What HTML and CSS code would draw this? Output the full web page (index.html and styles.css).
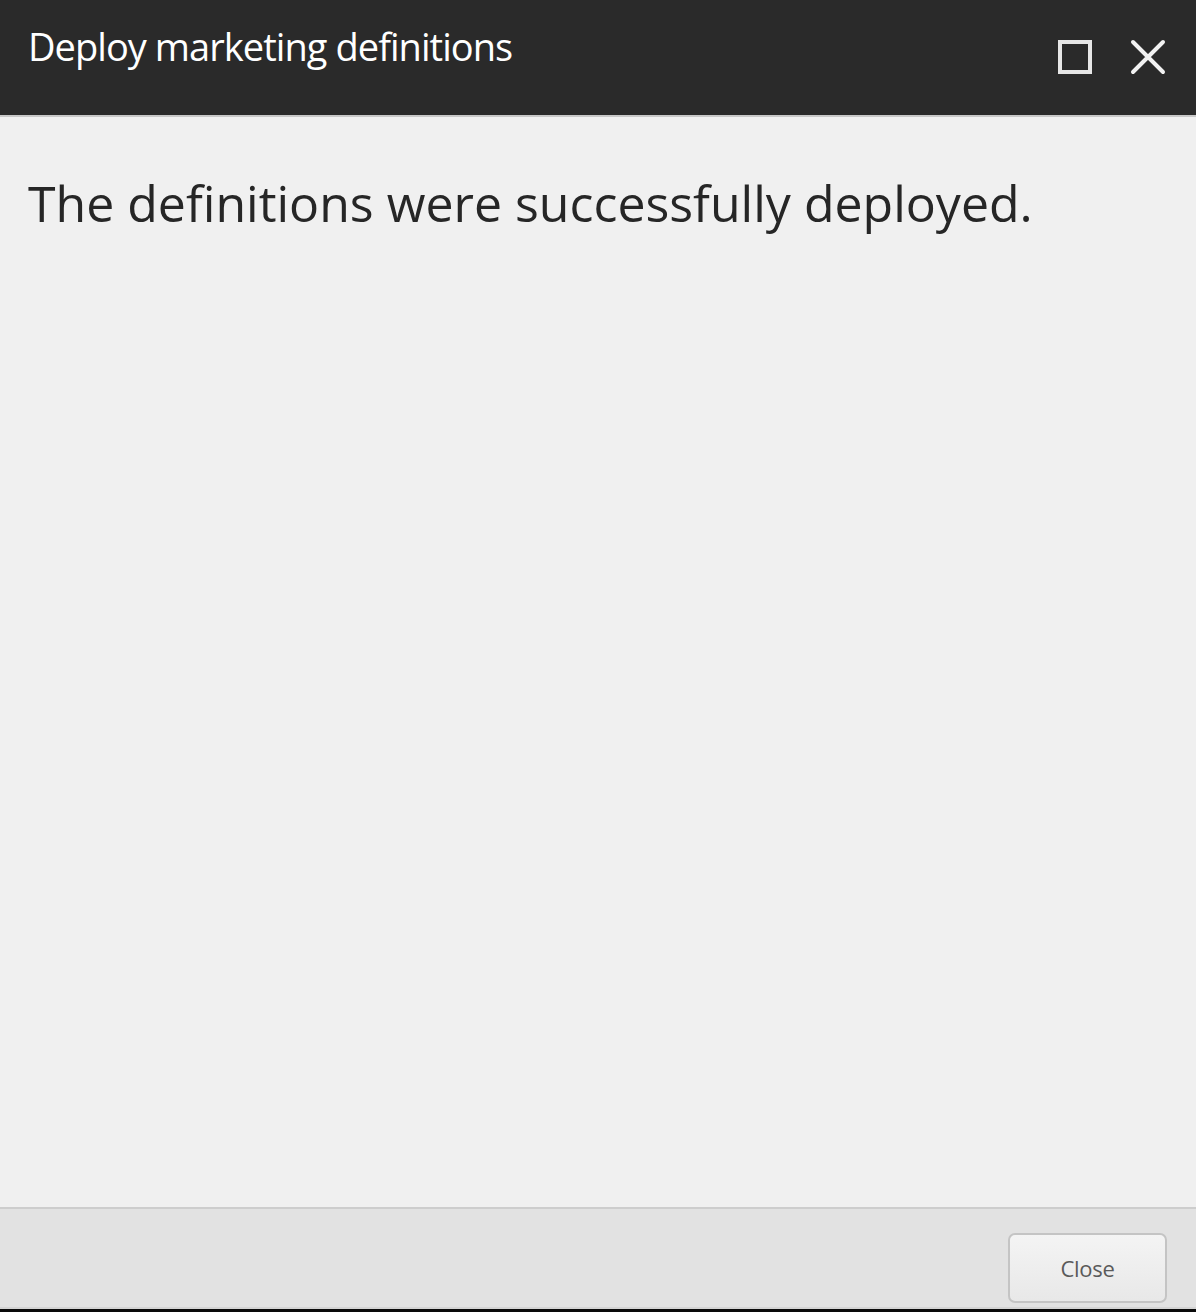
FILE: index.html
```html
<!DOCTYPE html>
<html>
<head>
<meta charset="utf-8">
<link rel="stylesheet" href="styles.css">
</head>
<body>
<div class="dialog">
  <header class="titlebar">
    <h1 class="title">Deploy marketing definitions</h1>
    <div class="controls">
      <svg class="icon" width="34" height="34" viewBox="0 0 34 34"><rect x="2" y="2" width="30" height="30" fill="none" stroke="#e6e6e6" stroke-width="4"/></svg>
      <svg class="icon" width="36" height="36" viewBox="0 0 36 36"><path d="M3 3 L33 33 M33 3 L3 33" stroke="#f2f2f2" stroke-width="4" stroke-linecap="round"/></svg>
    </div>
  </header>
  <main class="content">
    <p class="message">The definitions were successfully deployed.</p>
  </main>
  <footer class="footer">
    <button class="btn">Close</button>
  </footer>
</div>
</body>
</html>
```
FILE: styles.css
```css
html, body {
  margin: 0;
  padding: 0;
  height: 100%;
  background: #0a0a0a;
}
.dialog {
  height: 1309px;
  display: flex;
  flex-direction: column;
  background: #f0f0f0;
  font-family: "Open Sans", "DejaVu Sans", sans-serif;
}
.titlebar {
  height: 117px;
  box-sizing: border-box;
  background: #2a2a2a;
  border-bottom: 2px solid #c8c8c8;
  display: flex;
  align-items: flex-start;
  justify-content: space-between;
  padding: 0 30px 0 28px;
  flex: none;
}
.title {
  margin: 20px 0 0 0;
  color: #ffffff;
  font-weight: 400;
  font-size: 38px;
  letter-spacing: -0.95px;
  line-height: 52px;
}
.controls {
  display: flex;
  gap: 38px;
  margin-top: 39px;
  align-items: center;
}
.icon { display: block; }
.content {
  flex: 1;
  padding: 0 28px;
}
.message {
  margin: 52px 0 0 0;
  font-size: 50px;
  line-height: 68px;
  color: #262626;
  font-weight: 400;
}
.footer {
  flex: none;
  height: 102px;
  box-sizing: border-box;
  background: #e2e2e2;
  border-top: 2px solid #cdcdcd;
  border-bottom: 2px solid #d4d4d4;
  display: flex;
  justify-content: flex-end;
  align-items: flex-start;
  padding: 24px 29px 0 0;
}
.btn {
  width: 159px;
  height: 70px;
  border: 2px solid #c4c4c4;
  border-radius: 7px;
  background: linear-gradient(#f4f4f4, #e8e8e8);
  color: #5a5a5a;
  font-family: "Open Sans", "DejaVu Sans", sans-serif;
  font-size: 22px;
  letter-spacing: -0.3px;
  padding: 0;
}
```
